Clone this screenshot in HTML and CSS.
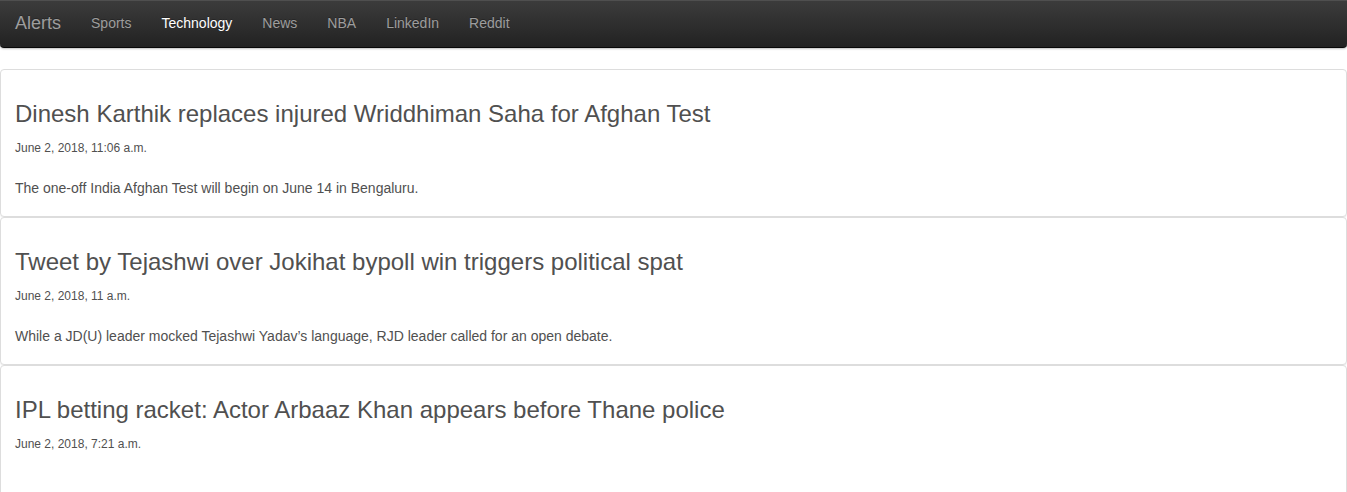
FILE: index.html
```html
<!DOCTYPE html>
<html lang="en">
<head>
<meta charset="utf-8">
<title>Alerts</title>
<link rel="stylesheet" href="styles.css">
</head>
<body>
<nav class="navbar">
  <a class="brand" href="#">Alerts</a>
  <ul class="nav">
    <li><a href="#">Sports</a></li>
    <li class="active"><a href="#">Technology</a></li>
    <li><a href="#">News</a></li>
    <li><a href="#">NBA</a></li>
    <li><a href="#">LinkedIn</a></li>
    <li><a href="#">Reddit</a></li>
  </ul>
</nav>
<main class="feed">
  <article class="panel">
    <h3 class="title">Dinesh Karthik replaces injured Wriddhiman Saha for Afghan Test</h3>
    <p class="date">June 2, 2018, 11:06 a.m.</p>
    <p class="desc">The one-off India Afghan Test will begin on June 14 in Bengaluru.</p>
  </article>
  <article class="panel">
    <h3 class="title">Tweet by Tejashwi over Jokihat bypoll win triggers political spat</h3>
    <p class="date">June 2, 2018, 11 a.m.</p>
    <p class="desc">While a JD(U) leader mocked Tejashwi Yadav’s language, RJD leader called for an open debate.</p>
  </article>
  <article class="panel">
    <h3 class="title">IPL betting racket: Actor Arbaaz Khan appears before Thane police</h3>
    <p class="date">June 2, 2018, 7:21 a.m.</p>
  </article>
</main>
</body>
</html>
```
FILE: styles.css
```css
* { box-sizing: border-box; }
html, body { margin: 0; padding: 0; }
body {
  font-family: "Liberation Sans", Arial, Helvetica, sans-serif;
  font-size: 14px;
  line-height: 1.42857;
  color: #505050;
  background: #fff;
}
a { text-decoration: none; }

.navbar {
  display: flex;
  align-items: flex-start;
  height: 48px;
  margin-bottom: 21px;
  background-image: linear-gradient(to bottom, #3c3c3c 0%, #222 100%);
  border-bottom: 1px solid #080808;
  border-radius: 0 0 4px 4px;
  box-shadow: inset 0 1px 0 rgba(255,255,255,.1), 0 1px 2px rgba(0,0,0,.25);
}
.brand {
  display: block;
  padding: 13px 15px 15px;
  font-size: 18px;
  line-height: 20px;
  color: #9d9d9d;
  text-shadow: 0 -1px 0 rgba(0,0,0,.25);
}
.nav {
  display: flex;
  list-style: none;
  margin: 0;
  padding: 0;
}
.nav a {
  display: block;
  padding: 13px 15px 15px;
  font-size: 14px;
  line-height: 20px;
  color: #9d9d9d;
  text-shadow: 0 -1px 0 rgba(0,0,0,.25);
}
.nav .active a { color: #fff; }

.feed {
  display: flex;
  flex-direction: column;
}
.panel {
  padding: 15px 14px;
  border: 1px solid #ddd;
  border-radius: 4px;
  box-shadow: 0 1px 1px rgba(0,0,0,.05);
  background: #fff;
  min-height: 148px;
}
.title {
  margin: 15px 0 13px;
  font-size: 24px;
  font-weight: 400;
  line-height: 27px;
  color: #505050;
}
.date {
  margin: 0 0 21px;
  font-size: 12px;
  line-height: 17px;
}
.desc {
  margin: 0 0 1px;
  font-size: 14px;
  line-height: 20px;
}
```
